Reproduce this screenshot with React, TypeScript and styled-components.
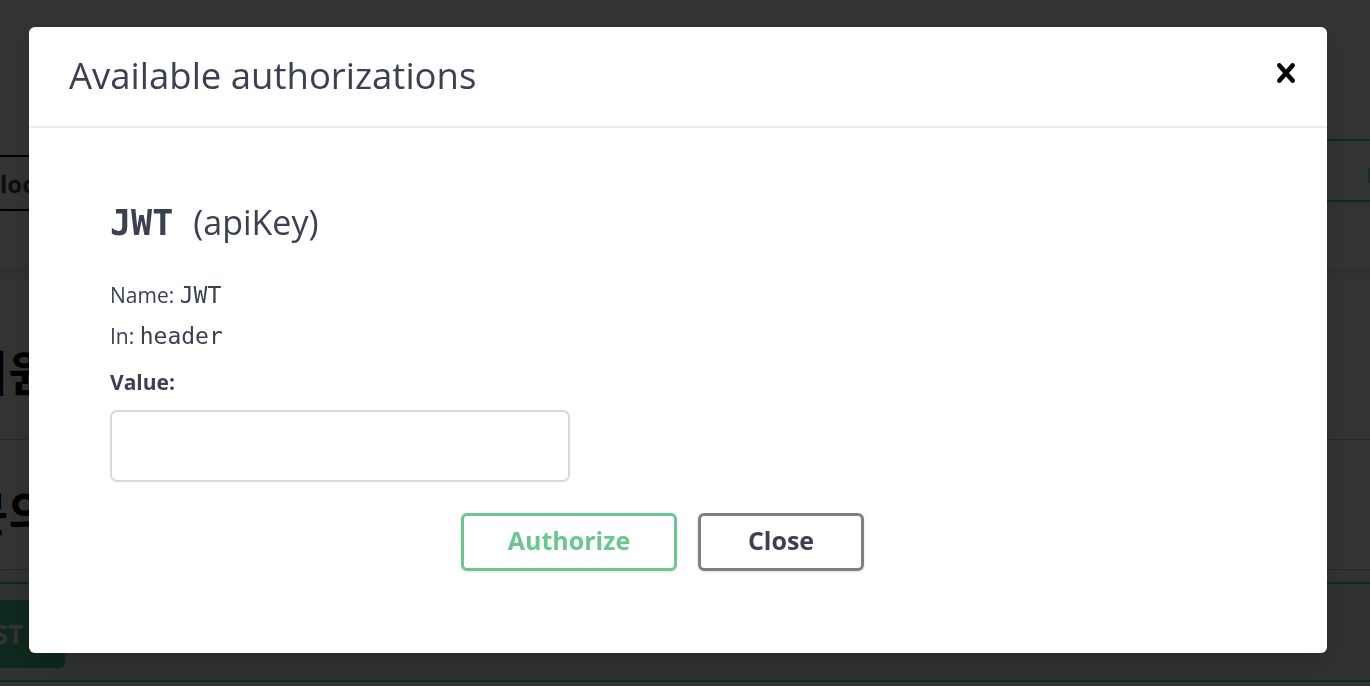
import styled, { createGlobalStyle } from "styled-components"

const GlobalStyle = createGlobalStyle`
    html, body {
        margin: 0;
        padding: 0;
        overflow: hidden;
        background: #fff;
    }
    body {
        font-family: 'Open Sans', 'Noto Sans CJK KR', sans-serif;
        color: #3b4151;
    }
    * {
        box-sizing: border-box;
    }
`

const CloseIcon = () => (
    <svg width="38" height="38" viewBox="0 0 20 20" aria-hidden="true">
        <path
            fill="#000"
            d="M14.348 14.849c-.469.469-1.229.469-1.697 0L10 11.819l-2.651 3.029c-.469.469-1.229.469-1.697 0-.469-.469-.469-1.229 0-1.697l2.758-3.15-2.759-3.152c-.469-.469-.469-1.228 0-1.697.469-.469 1.228-.469 1.697 0L10 8.183l2.651-3.031c.469-.469 1.228-.469 1.697 0 .469.469.469 1.229 0 1.697l-2.758 3.152 2.758 3.15c.469.469.469 1.229 0 1.698z"
        />
    </svg>
)

const LockIcon = () => (
    <svg width="30" height="30" viewBox="0 0 20 20" aria-hidden="true">
        <path
            fill="#49cc90"
            d="M15.8 8H14V5.6C14 2.703 12.665 1 10 1 7.334 1 6 2.703 6 5.6V8H4c-.553 0-1 .646-1 1.199V17c0 .549.428 1.139.951 1.307l1.197.387C5.672 18.861 6.55 19 7.1 19h5.8c.549 0 1.428-.139 1.951-.307l1.196-.387c.524-.167.953-.757.953-1.306V9.199C17 8.646 16.352 8 15.8 8zM12 8H8V5.199C8 3.754 8.797 3 10 3c1.203 0 2 .754 2 2.199V8z"
        />
    </svg>
)

const App = () => {
    return (
        <>
            <GlobalStyle />

            {/* swagger page behind the dialog, scrolled a little to the side */}
            <Viewport>
                <Page>
                    <TopSpace />
                    <SchemeBar>
                        <ServerSelect>localhost:8080</ServerSelect>
                        <PageAuthButton>
                            <LockIcon />
                        </PageAuthButton>
                    </SchemeBar>
                    <TagHeader $top={70} $height={100}>
                        <TagName>회원</TagName>
                    </TagHeader>
                    <TagHeader $top={40} $height={90}>
                        <TagName>문의</TagName>
                    </TagHeader>
                    <OpBlock>
                        <MethodBadge>POST</MethodBadge>
                        <OpPath>/api/qna</OpPath>
                    </OpBlock>
                </Page>
            </Viewport>

            <Backdrop>
                <Dialog>
                    <DialogHeader>
                        <DialogTitle>Available authorizations</DialogTitle>
                        <CloseButton aria-label="close">
                            <CloseIcon />
                        </CloseButton>
                    </DialogHeader>

                    <DialogBody>
                        <AuthTitle>
                            <Code $size={35} $bold>JWT</Code>
                            <AuthType>(apiKey)</AuthType>
                        </AuthTitle>

                        <FieldRow>
                            Name: <Code $size={23}>JWT</Code>
                        </FieldRow>
                        <FieldRow>
                            In: <Code $size={23}>header</Code>
                        </FieldRow>
                        <ValueLabel>Value:</ValueLabel>
                        <ValueInput type="text" />

                        <ButtonRow>
                            <ModalButton $variant="authorize">Authorize</ModalButton>
                            <ModalButton $variant="close">Close</ModalButton>
                        </ButtonRow>
                    </DialogBody>
                </Dialog>
            </Backdrop>
        </>
    )
}

const Viewport = styled.div`
    width: 100%;
    height: 686px;
    overflow: hidden;
`

const Page = styled.div`
    width: calc(100% + 200px);
    margin-left: -100px;
    height: 686px;
    background: #fff;
`

const TopSpace = styled.div`
    height: 137px;
`

const SchemeBar = styled.div`
    height: 133px;
    display: flex;
    justify-content: space-between;
    align-items: flex-start;
    box-shadow: 0 2px 4px rgba(0, 0, 0, 0.15);
`

const ServerSelect = styled.div`
    margin: 18px 0 0 80px;
    height: 56px;
    padding: 0 18px;
    border: 2px solid #000;
    border-radius: 4px;
    display: flex;
    align-items: center;
    font-size: 24px;
    font-weight: 700;
    color: #3b4151;
`

const PageAuthButton = styled.div`
    margin-top: 2px;
    width: 155px;
    height: 63px;
    padding-left: 47px;
    border: 2px solid #49cc90;
    border-radius: 4px;
    display: flex;
    align-items: center;
`

const TagHeader = styled.div<{ $top: number; $height: number }>`
    margin-top: ${({ $top }) => $top}px;
    height: ${({ $height }) => $height}px;
    border-bottom: 1px solid rgba(59, 65, 81, 0.3);
    display: flex;
    align-items: flex-start;
    padding-left: 64px;
`

const TagName = styled.span`
    font-family: 'Noto Sans CJK KR', sans-serif;
    font-size: 48px;
    font-weight: 700;
    line-height: 60px;
    color: #000;
`

const OpBlock = styled.div`
    margin-top: 12px;
    height: 100px;
    border: 2px solid #49cc90;
    background: rgba(73, 204, 144, 0.1);
    display: flex;
    align-items: flex-start;
    gap: 24px;
    padding: 16px 0 0 13px;
`

const MethodBadge = styled.span`
    width: 150px;
    height: 68px;
    border-radius: 6px;
    background: #49cc90;
    color: #fff;
    font-size: 26px;
    font-weight: 700;
    display: flex;
    align-items: center;
    justify-content: center;
`

const OpPath = styled.span`
    font-family: 'DejaVu Sans Mono', monospace;
    font-size: 30px;
    font-weight: 700;
    color: #3b4151;
    line-height: 68px;
`

const Backdrop = styled.div`
    position: fixed;
    inset: 0;
    background: rgba(0, 0, 0, 0.8);
    padding: 27px 43px 33px 29px;
    display: flex;
`

const Dialog = styled.div`
    flex: 1;
    background: #fff;
    border-radius: 6px;
    box-shadow: 0 10px 30px -2px rgba(0, 0, 0, 0.2);
    display: flex;
    flex-direction: column;
`

const DialogHeader = styled.div`
    height: 101px;
    flex-shrink: 0;
    border-bottom: 2px solid #ebebeb;
    display: flex;
    align-items: center;
    justify-content: space-between;
    padding: 0 22px 0 40px;
`

const DialogTitle = styled.h3`
    margin: 0 0 4px;
    font-size: 36.5px;
    font-weight: 500;
    color: #3b4151;
`

const CloseButton = styled.button`
    border: none;
    background: none;
    padding: 0;
    margin-bottom: 8px;
    display: flex;
    cursor: pointer;
`

const DialogBody = styled.div`
    padding: 72px 31px 0 81px;
    display: flex;
    flex-direction: column;
    align-items: flex-start;
`

const AuthTitle = styled.h4`
    margin: 0 0 36px;
    display: flex;
    align-items: baseline;
    gap: 20px;
    line-height: 44px;
`

const Code = styled.span<{ $size: number; $bold?: boolean }>`
    font-family: 'DejaVu Sans Mono', monospace;
    font-size: ${({ $size }) => $size}px;
    font-weight: ${({ $bold }) => ($bold ? 600 : 400)};
    color: #3b4151;
`

const AuthType = styled.span`
    font-size: 34px;
    font-weight: 400;
    color: #3b4151;
`

const FieldRow = styled.p`
    margin: 0 0 12px;
    font-size: 21px;
    line-height: 29px;
    color: #3b4151;
`

const ValueLabel = styled.label`
    margin: 5px 0 13px;
    font-size: 21px;
    line-height: 29px;
    font-weight: 700;
    color: #3b4151;
`

const ValueInput = styled.input`
    width: 460px;
    height: 72px;
    border: 2px solid #d9d9d9;
    border-radius: 7px;
    background: #fff;
    outline: none;
    padding: 0 14px;
    font-size: 21px;
`

const ButtonRow = styled.div`
    align-self: stretch;
    margin: 31px 0 0 -81px;
    display: flex;
    justify-content: center;
    gap: 21px;
`

const ModalButton = styled.button<{ $variant: 'authorize' | 'close' }>`
    width: ${({ $variant }) => ($variant === 'authorize' ? 216 : 166)}px;
    height: 58px;
    border-radius: 6px;
    border: 3px solid ${({ $variant }) => ($variant === 'authorize' ? '#6cc692' : '#808080')};
    background: transparent;
    box-shadow: 0 1px 3px rgba(0, 0, 0, 0.12);
    font-family: 'Open Sans', sans-serif;
    font-size: 25px;
    font-weight: 700;
    line-height: 1;
    padding: 0 0 4px;
    color: ${({ $variant }) => ($variant === 'authorize' ? '#6cc692' : '#3b4151')};
    cursor: pointer;
`

export default App
